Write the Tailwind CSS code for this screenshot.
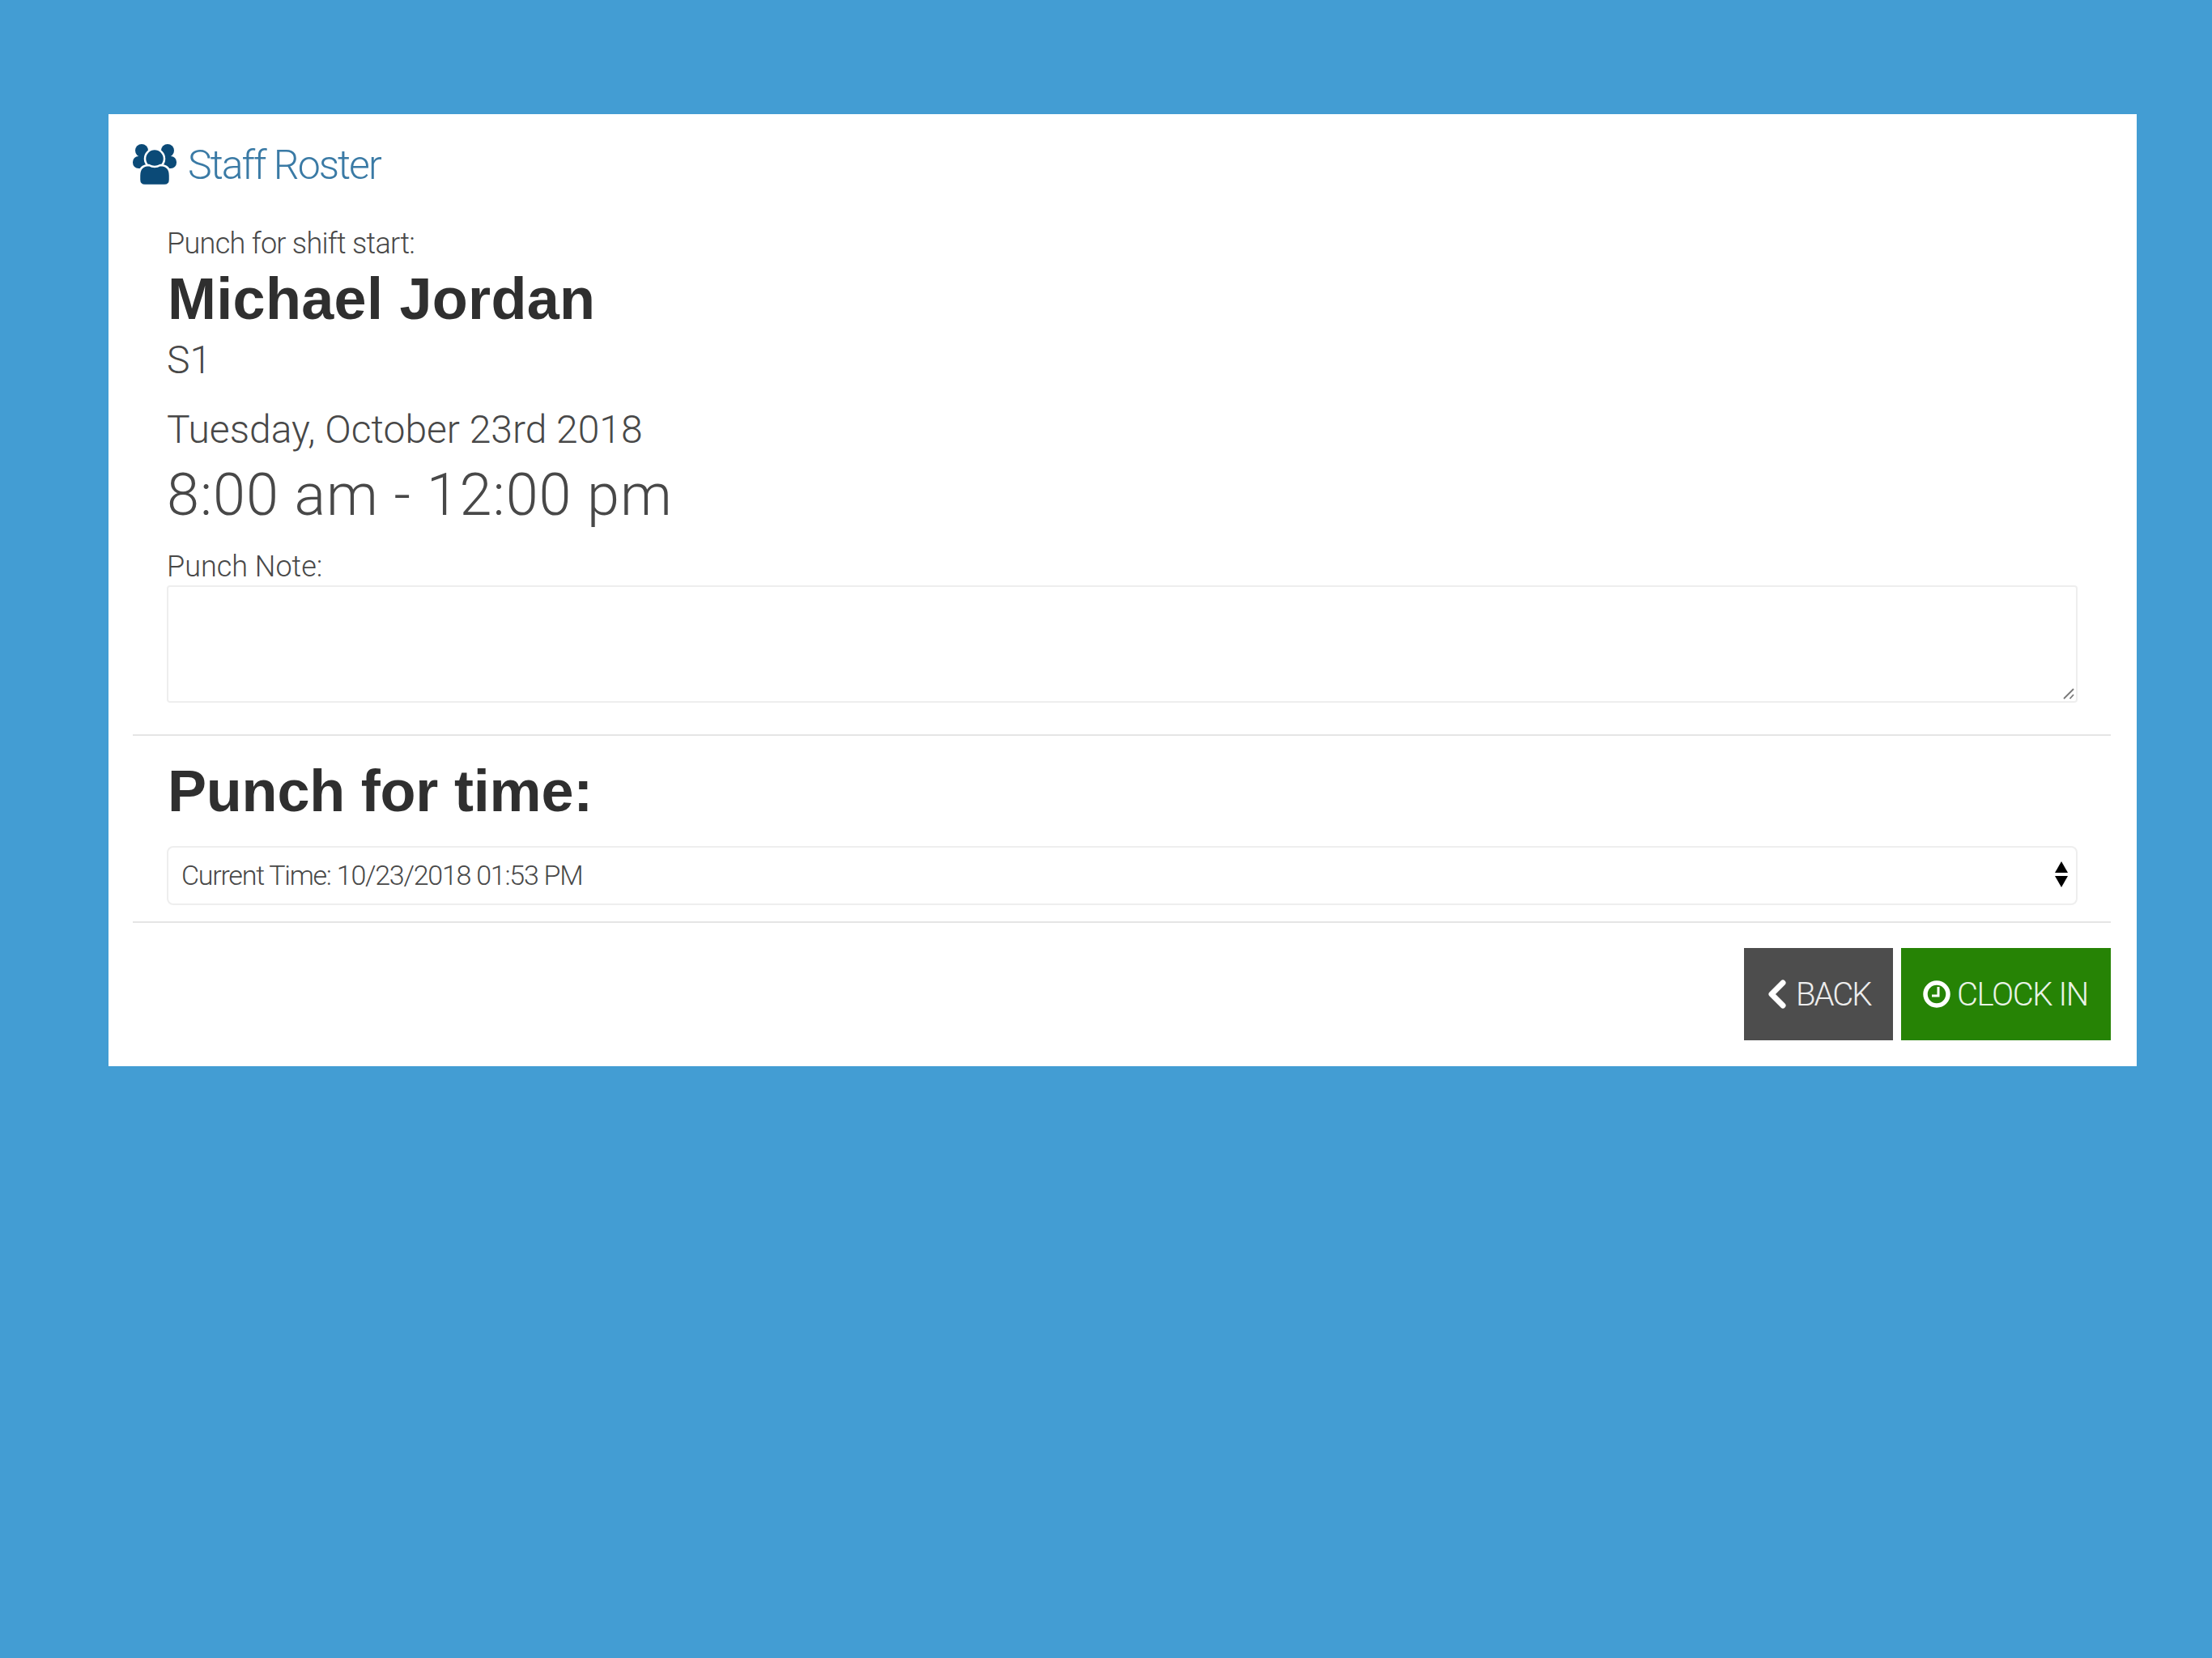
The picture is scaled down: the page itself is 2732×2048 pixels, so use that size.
<!DOCTYPE html>
<html lang="en">
<head>
  <meta charset="UTF-8" />
  <title>Staff Roster</title>
  <script src="https://cdn.jsdelivr.net/npm/@tailwindcss/browser@4"></script>
</head>
<body class="bg-[#439dd3] min-h-screen font-['Roboto','Liberation_Sans',sans-serif] font-light text-[#484848]">
  <div class="pt-[141px] pl-[134px] w-[2639px]">
    <div class="bg-white h-[1176px] pt-[27px] pl-[30px] pr-[32px]">

      <div class="flex items-center h-[72px] text-[50px] leading-[72px] tracking-[-2px] text-[#3a7aa5]">
        <svg class="w-[54px] h-[52px] shrink-0 mb-[2px] mr-[14px]" viewBox="0 0 54 52" fill="#0b4a77">
          <circle cx="11" cy="9" r="8" />
          <circle cx="43" cy="9" r="8" />
          <rect x="0" y="16" width="22" height="15" rx="7" />
          <rect x="32" y="16" width="22" height="15" rx="7" />
          <circle cx="27" cy="19" r="12" stroke="#fff" stroke-width="2.500" />
          <path d="M8 40q0-13 12-13q7 4 14 0q12 0 12 13v5q0 7-7 7h-24q-7 0-7-7z" stroke="#fff" stroke-width="2.500" />
        </svg>
        <span>Staff Roster</span>
      </div>

      <div class="pl-[42px] pr-[41px] mt-[39px]">
        <div class="text-[36px] leading-[44px] tracking-[-0.7px]">Punch for shift start:</div>
        <h1 class="font-['Liberation_Sans',sans-serif] font-bold text-[#2f2f2f] text-[72px] leading-[80px] tracking-[0.3px] mt-[6px] ml-[1px]">Michael Jordan</h1>
        <div class="text-[48px] leading-[56px] mt-[8px]">S1</div>
        <div class="text-[48px] leading-[56px] mt-[30px]">Tuesday, October 23rd 2018</div>
        <div class="text-[72px] leading-[84px] tracking-[1px] mt-[11px]">8:00 am - 12:00 pm</div>
        <label class="block text-[36px] leading-[44px] mt-[24px]">Punch Note:</label>
        <div class="relative mt-[1px]">
          <textarea class="block w-full h-[145px] resize-none border-2 border-[#eee] rounded-[4px]"></textarea>
          <svg class="absolute right-[4px] bottom-[4px] w-[14px] h-[14px] pointer-events-none" viewBox="0 0 14 14" fill="none" stroke="#777" stroke-width="1.800">
            <path d="M1 13l12-12" />
            <path d="M8.500 13l4.500-5" />
          </svg>
        </div>
      </div>

      <hr class="border-t-2 border-[#e5e5e5] mt-[39px]" />

      <div class="pl-[42px] pr-[41px]">
        <h2 class="font-['Liberation_Sans',sans-serif] font-bold text-[#2f2f2f] text-[72px] leading-[80px] tracking-[-0.2px] mt-[28px] ml-[1px]">Punch for time:</h2>
        <div class="relative mt-[28px]">
          <select class="block w-full h-[73px] appearance-none border-2 border-[#eee] rounded-[8px] pl-[16px] text-[34px] tracking-[-1.25px] bg-white">
            <option>Current Time: 10/23/2018 01:53 PM</option>
          </select>
          <svg class="absolute right-[12px] top-[19px] w-[16px] h-[32px]" viewBox="0 0 16 32" fill="#000">
            <path d="M8 0l8 14h-16z" />
            <path d="M0 18h16l-8 14z" />
          </svg>
        </div>
      </div>

      <hr class="border-t-2 border-[#e5e5e5] mt-[20px]" />

      <div class="flex justify-end gap-[10px] mt-[31px]">
        <button class="flex items-center gap-[12px] pl-[30px] pt-[2px] w-[184px] h-[114px] bg-[#4d4d4d] text-white/90 text-[40px] tracking-[-2px]">
          <svg class="w-[22px] h-[36px] -mt-[3px]" viewBox="0 0 22 36" fill="none" stroke="#fff" stroke-width="7" stroke-linecap="round" stroke-linejoin="round">
            <path d="M18 4l-14 14 14 14" />
          </svg>
          BACK
        </button>
        <button class="flex items-center gap-[8px] pl-[27px] pt-[2px] w-[259px] h-[114px] bg-[#268305] text-white/90 text-[40px] tracking-[-1.4px]">
          <svg class="w-[34px] h-[34px] -mt-[3px]" viewBox="0 0 34 34" fill="none" stroke="#fff">
            <circle cx="17" cy="17" r="14" stroke-width="5.500" />
            <path d="M19 8v11h-8" stroke-width="3" />
          </svg>
          CLOCK IN
        </button>
      </div>
    </div>
  </div>
</body>
</html>
